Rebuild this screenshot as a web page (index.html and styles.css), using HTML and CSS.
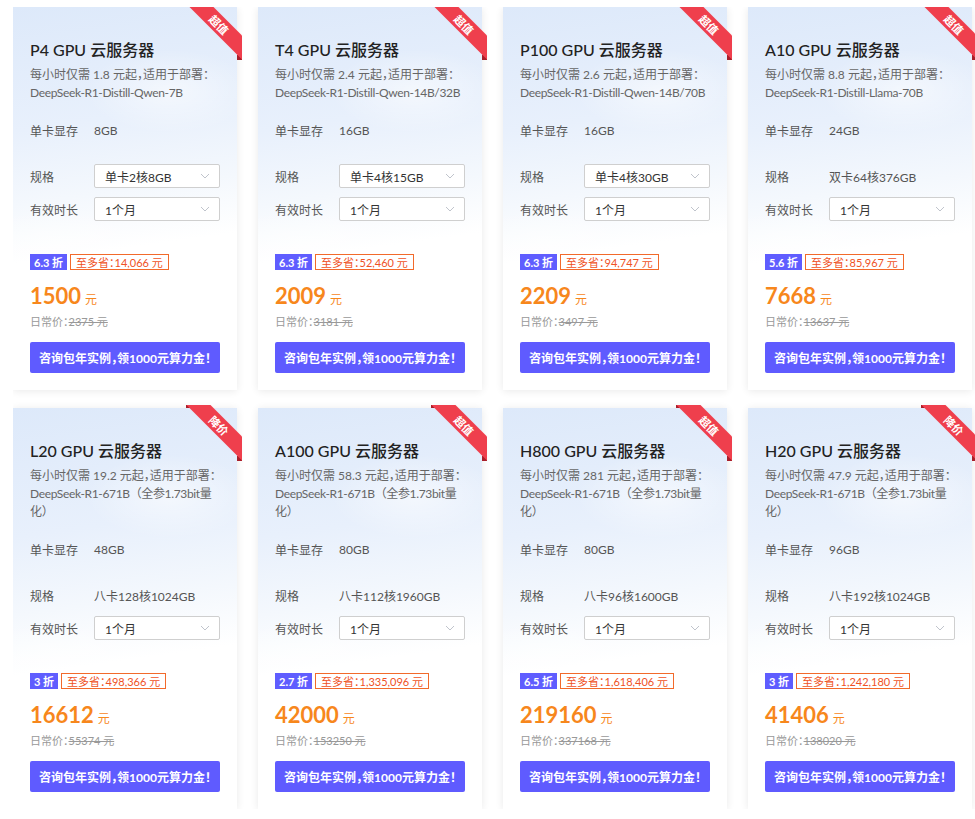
FILE: index.html
```html
<!DOCTYPE html>
<html lang="zh-CN">
<head>
<meta charset="utf-8">
<title>GPU 云服务器</title>
<link rel="stylesheet" href="styles.css">
</head>
<body>
<div class="grid">

  <div class="card">
    <div class="ribbon"><span>超值</span></div>
    <h3 class="title">P4 GPU 云服务器</h3>
    <p class="desc"><span class="line1">每小时仅需 1.8 元起，适用于部署：</span><span class="model nw">DeepSeek-R1-Distill-Qwen-7B</span></p>
    <div class="row first"><span class="label">单卡显存</span><span class="val">8GB</span></div>
    <div class="row spec"><span class="label">规格</span><div class="select">单卡2核8GB<svg class="arrow" width="10" height="6" viewBox="0 0 10 6"><polyline points="1,1 5,5 9,1" fill="none" stroke="#c0c4cc" stroke-width="1"/></svg></div></div>
    <div class="row dur"><span class="label">有效时长</span><div class="select">1个月<svg class="arrow" width="10" height="6" viewBox="0 0 10 6"><polyline points="1,1 5,5 9,1" fill="none" stroke="#c0c4cc" stroke-width="1"/></svg></div></div>
    <div class="tags"><span class="off">6.3 折</span><span class="save">至多省：14,066 元</span></div>
    <div class="price"><span class="num">1500</span><span class="unit">元</span></div>
    <div class="orig">日常价：<s>2375 元</s></div>
    <button class="btn">咨询包年实例，领1000元算力金！</button>
  </div>

  <div class="card">
    <div class="ribbon"><span>超值</span></div>
    <h3 class="title">T4 GPU 云服务器</h3>
    <p class="desc"><span class="line1">每小时仅需 2.4 元起，适用于部署：</span><span class="model nw">DeepSeek-R1-Distill-Qwen-14B/32B</span></p>
    <div class="row first"><span class="label">单卡显存</span><span class="val">16GB</span></div>
    <div class="row spec"><span class="label">规格</span><div class="select">单卡4核15GB<svg class="arrow" width="10" height="6" viewBox="0 0 10 6"><polyline points="1,1 5,5 9,1" fill="none" stroke="#c0c4cc" stroke-width="1"/></svg></div></div>
    <div class="row dur"><span class="label">有效时长</span><div class="select">1个月<svg class="arrow" width="10" height="6" viewBox="0 0 10 6"><polyline points="1,1 5,5 9,1" fill="none" stroke="#c0c4cc" stroke-width="1"/></svg></div></div>
    <div class="tags"><span class="off">6.3 折</span><span class="save">至多省：52,460 元</span></div>
    <div class="price"><span class="num">2009</span><span class="unit">元</span></div>
    <div class="orig">日常价：<s>3181 元</s></div>
    <button class="btn">咨询包年实例，领1000元算力金！</button>
  </div>

  <div class="card">
    <div class="ribbon"><span>超值</span></div>
    <h3 class="title">P100 GPU 云服务器</h3>
    <p class="desc"><span class="line1">每小时仅需 2.6 元起，适用于部署：</span><span class="model nw">DeepSeek-R1-Distill-Qwen-14B/70B</span></p>
    <div class="row first"><span class="label">单卡显存</span><span class="val">16GB</span></div>
    <div class="row spec"><span class="label">规格</span><div class="select">单卡4核30GB<svg class="arrow" width="10" height="6" viewBox="0 0 10 6"><polyline points="1,1 5,5 9,1" fill="none" stroke="#c0c4cc" stroke-width="1"/></svg></div></div>
    <div class="row dur"><span class="label">有效时长</span><div class="select">1个月<svg class="arrow" width="10" height="6" viewBox="0 0 10 6"><polyline points="1,1 5,5 9,1" fill="none" stroke="#c0c4cc" stroke-width="1"/></svg></div></div>
    <div class="tags"><span class="off">6.3 折</span><span class="save">至多省：94,747 元</span></div>
    <div class="price"><span class="num">2209</span><span class="unit">元</span></div>
    <div class="orig">日常价：<s>3497 元</s></div>
    <button class="btn">咨询包年实例，领1000元算力金！</button>
  </div>

  <div class="card">
    <div class="ribbon"><span>超值</span></div>
    <h3 class="title">A10 GPU 云服务器</h3>
    <p class="desc"><span class="line1">每小时仅需 8.8 元起，适用于部署：</span><span class="model nw">DeepSeek-R1-Distill-Llama-70B</span></p>
    <div class="row first"><span class="label">单卡显存</span><span class="val">24GB</span></div>
    <div class="row spec"><span class="label">规格</span><span class="val">双卡64核376GB</span></div>
    <div class="row dur"><span class="label">有效时长</span><div class="select">1个月<svg class="arrow" width="10" height="6" viewBox="0 0 10 6"><polyline points="1,1 5,5 9,1" fill="none" stroke="#c0c4cc" stroke-width="1"/></svg></div></div>
    <div class="tags"><span class="off">5.6 折</span><span class="save">至多省：85,967 元</span></div>
    <div class="price"><span class="num">7668</span><span class="unit">元</span></div>
    <div class="orig">日常价：<s>13637 元</s></div>
    <button class="btn">咨询包年实例，领1000元算力金！</button>
  </div>

  <div class="card">
    <div class="ribbon"><span>降价</span></div>
    <h3 class="title">L20 GPU 云服务器</h3>
    <p class="desc"><span class="line1">每小时仅需 19.2 元起，适用于部署：</span><span class="model">DeepSeek-R1-671B（全参1.73bit量化）</span></p>
    <div class="row first"><span class="label">单卡显存</span><span class="val">48GB</span></div>
    <div class="row spec"><span class="label">规格</span><span class="val">八卡128核1024GB</span></div>
    <div class="row dur"><span class="label">有效时长</span><div class="select">1个月<svg class="arrow" width="10" height="6" viewBox="0 0 10 6"><polyline points="1,1 5,5 9,1" fill="none" stroke="#c0c4cc" stroke-width="1"/></svg></div></div>
    <div class="tags"><span class="off">3 折</span><span class="save">至多省：498,366 元</span></div>
    <div class="price"><span class="num">16612</span><span class="unit">元</span></div>
    <div class="orig">日常价：<s>55374 元</s></div>
    <button class="btn">咨询包年实例，领1000元算力金！</button>
  </div>

  <div class="card">
    <div class="ribbon"><span>超值</span></div>
    <h3 class="title">A100 GPU 云服务器</h3>
    <p class="desc"><span class="line1">每小时仅需 58.3 元起，适用于部署：</span><span class="model">DeepSeek-R1-671B（全参1.73bit量化）</span></p>
    <div class="row first"><span class="label">单卡显存</span><span class="val">80GB</span></div>
    <div class="row spec"><span class="label">规格</span><span class="val">八卡112核1960GB</span></div>
    <div class="row dur"><span class="label">有效时长</span><div class="select">1个月<svg class="arrow" width="10" height="6" viewBox="0 0 10 6"><polyline points="1,1 5,5 9,1" fill="none" stroke="#c0c4cc" stroke-width="1"/></svg></div></div>
    <div class="tags"><span class="off">2.7 折</span><span class="save">至多省：1,335,096 元</span></div>
    <div class="price"><span class="num">42000</span><span class="unit">元</span></div>
    <div class="orig">日常价：<s>153250 元</s></div>
    <button class="btn">咨询包年实例，领1000元算力金！</button>
  </div>

  <div class="card">
    <div class="ribbon"><span>超值</span></div>
    <h3 class="title">H800 GPU 云服务器</h3>
    <p class="desc"><span class="line1">每小时仅需 281 元起，适用于部署：</span><span class="model">DeepSeek-R1-671B（全参1.73bit量化）</span></p>
    <div class="row first"><span class="label">单卡显存</span><span class="val">80GB</span></div>
    <div class="row spec"><span class="label">规格</span><span class="val">八卡96核1600GB</span></div>
    <div class="row dur"><span class="label">有效时长</span><div class="select">1个月<svg class="arrow" width="10" height="6" viewBox="0 0 10 6"><polyline points="1,1 5,5 9,1" fill="none" stroke="#c0c4cc" stroke-width="1"/></svg></div></div>
    <div class="tags"><span class="off">6.5 折</span><span class="save">至多省：1,618,406 元</span></div>
    <div class="price"><span class="num">219160</span><span class="unit">元</span></div>
    <div class="orig">日常价：<s>337168 元</s></div>
    <button class="btn">咨询包年实例，领1000元算力金！</button>
  </div>

  <div class="card">
    <div class="ribbon"><span>降价</span></div>
    <h3 class="title">H20 GPU 云服务器</h3>
    <p class="desc"><span class="line1">每小时仅需 47.9 元起，适用于部署：</span><span class="model">DeepSeek-R1-671B（全参1.73bit量化）</span></p>
    <div class="row first"><span class="label">单卡显存</span><span class="val">96GB</span></div>
    <div class="row spec"><span class="label">规格</span><span class="val">八卡192核1024GB</span></div>
    <div class="row dur"><span class="label">有效时长</span><div class="select">1个月<svg class="arrow" width="10" height="6" viewBox="0 0 10 6"><polyline points="1,1 5,5 9,1" fill="none" stroke="#c0c4cc" stroke-width="1"/></svg></div></div>
    <div class="tags"><span class="off">3 折</span><span class="save">至多省：1,242,180 元</span></div>
    <div class="price"><span class="num">41406</span><span class="unit">元</span></div>
    <div class="orig">日常价：<s>138020 元</s></div>
    <button class="btn">咨询包年实例，领1000元算力金！</button>
  </div>

</div>
</body>
</html>
```

FILE: styles.css
```css
* { box-sizing: border-box; }

html, body {
  background: #ffffff;
}

body {
  margin: 7px 0 0 13px;
  font-family: "Lato", "Noto Sans CJK SC", sans-serif;
  color: #333;
}

.grid {
  display: grid;
  grid-template-columns: repeat(4, 224px);
  column-gap: 21px;
  row-gap: 18px;
}

.card {
  position: relative;
  display: flex;
  flex-direction: column;
  padding: 31px 17px 17px;
  background:
    radial-gradient(ellipse 120px 60px at 70% 22%, rgba(255,255,255,0.55), rgba(255,255,255,0) 70%),
    radial-gradient(ellipse 140px 50px at 20% 62%, rgba(255,255,255,0.5), rgba(255,255,255,0) 70%),
    linear-gradient(172deg, #dde9fa 0%, #e8f0fc 30%, #f4f8fd 48%, #ffffff 62%);
  box-shadow: 0 1px 8px rgba(0, 0, 0, 0.09);
}

.ribbon {
  position: absolute;
  top: -3px;
  right: -5px;
  width: 58px;
  height: 58px;
  overflow: hidden;
}
.ribbon::before {
  content: "";
  position: absolute;
  left: 2px;
  top: 0;
  width: 5px;
  height: 3px;
  background: #a81e2a;
}
.ribbon::after {
  content: "";
  position: absolute;
  right: 0;
  bottom: 2px;
  width: 5px;
  height: 5px;
  background: #a81e2a;
}
.ribbon span {
  position: absolute;
  left: -7px;
  top: 12px;
  width: 84px;
  height: 17px;
  line-height: 17px;
  background: #ef3f4d;
  color: #fff;
  font-size: 11px;
  font-weight: 700;
  text-align: center;
  transform: rotate(45deg);
  z-index: 1;
}

.title {
  margin: 0;
  font-size: 16px;
  line-height: 24px;
  font-weight: 500;
  color: #222;
}

.desc {
  margin: 4px 0 0;
  font-size: 12px;
  line-height: 18px;
  color: #666;
  font-feature-settings: "halt";
}
.line1 {
  display: block;
  white-space: nowrap;
}
.model {
  letter-spacing: -0.35px;
  font-feature-settings: normal;
}
.nw {
  white-space: nowrap;
}

.row {
  display: flex;
  align-items: center;
  height: 24px;
  font-size: 12px;
  color: #555;
}
.row.first { margin-top: 16px; }
.row.spec { margin-top: 22px; }
.row.dur { margin-top: 9px; }

.label {
  width: 64px;
  flex: none;
  color: #555;
}
.val {
  color: #555;
}

.select {
  position: relative;
  flex: 1;
  height: 24px;
  display: flex;
  align-items: center;
  padding: 0 10px;
  border: 1px solid #cfcfcf;
  border-radius: 2px;
  background: #fff;
  color: #333;
  font-size: 12px;
}
.arrow {
  position: absolute;
  right: 9px;
  top: 8px;
}

.tags {
  display: flex;
  gap: 3px;
  margin-top: 33px;
  height: 16px;
}
.off {
  display: inline-flex;
  align-items: center;
  padding: 0 4px;
  height: 16px;
  background: #5f5dff;
  color: #fff;
  font-size: 11px;
  font-weight: 700;
}
.save {
  display: inline-flex;
  align-items: center;
  padding: 0 5px;
  height: 16px;
  border: 1px solid #f26a2b;
  color: #ef5226;
  font-size: 11px;
  font-feature-settings: "halt";
}

.price {
  margin-top: 12px;
  height: 28px;
  display: flex;
  align-items: baseline;
  color: #f7871c;
}
.num {
  font-size: 22px;
  line-height: 28px;
  font-weight: 700;
}
.unit {
  margin-left: 4px;
  font-size: 12px;
}

.orig {
  margin-top: 4px;
  font-size: 11px;
  line-height: 16px;
  color: #999;
  font-feature-settings: "halt";
}
.orig s {
  color: #999;
}

.btn {
  margin-top: 12px;
  height: 31px;
  width: 100%;
  padding: 0;
  border: none;
  border-radius: 2px;
  background: #5f5bff;
  color: #fff;
  font-family: inherit;
  font-size: 12px;
  font-weight: 700;
  white-space: nowrap;
  font-feature-settings: "halt";
  cursor: pointer;
}
```
